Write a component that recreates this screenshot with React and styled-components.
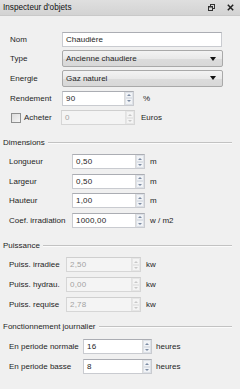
import styled, { createGlobalStyle } from "styled-components";

const GlobalStyle = createGlobalStyle`
  html, body {
    margin: 0;
    padding: 0;
    background: #f0f0f0;
  }
  body {
    font-family: "Liberation Sans", Arial, sans-serif;
    font-size: 8px;
    color: #1e1e1e;
  }
`;

const Panel = styled.div`
  width: 240px;
  height: 389px;
  display: flex;
  flex-direction: column;
  background: #f0f0f0;
  overflow: hidden;
`;

const TitleBar = styled.div`
  height: 15px;
  flex: none;
  display: flex;
  align-items: center;
  justify-content: space-between;
  padding: 0 6px 0 3px;
  background: linear-gradient(#dfdfdf, #d3d3d3);
  border-bottom: 1px solid #c9c9c9;
  font-size: 8.2px;
  color: #111;
`;

const TitleIcons = styled.div`
  display: flex;
  align-items: center;
  gap: 12px;
`;

const Section = styled.div`
  display: flex;
  flex-direction: column;
  gap: ${(p) => p.$gap}px;
  margin-top: ${(p) => p.$top}px;
  padding-left: ${(p) => p.$left}px;
`;

const GroupTitle = styled.div`
  height: 12px;
  display: flex;
  align-items: center;
  gap: 3px;
  padding: 0 8px 0 3px;
  margin-top: ${(p) => p.$top}px;
  margin-bottom: ${(p) => p.$bottom}px;
  span {
    white-space: nowrap;
  }
  &::after {
    content: "";
    flex: 1;
    height: 0;
    border-top: 1px solid #c2c2c2;
    border-bottom: 1px solid #fbfbfb;
  }
`;

const Row = styled.div`
  height: 16px;
  display: flex;
  align-items: center;
`;

const Label = styled.div`
  width: ${(p) => p.$w}px;
  flex: none;
  display: flex;
  align-items: center;
  white-space: nowrap;
`;

const Unit = styled.div`
  margin-left: ${(p) => p.$gap}px;
  white-space: nowrap;
`;

const TextInput = styled.div`
  width: ${(p) => p.$w}px;
  height: 15px;
  box-sizing: border-box;
  border: 1px solid #c9cbd0;
  border-top-color: #abadb3;
  background: #fff;
  padding-left: 3px;
  display: flex;
  align-items: center;
`;

const Combo = styled.div`
  width: ${(p) => p.$w}px;
  height: 17px;
  box-sizing: border-box;
  border: 1px solid #a9a9a9;
  border-radius: 2px;
  background: linear-gradient(#f3f3f3, #e9e9e9 50%, #dcdcdc 51%, #d8d8d8);
  padding: 0 6px 0 3px;
  display: flex;
  align-items: center;
  justify-content: space-between;
`;

const Spin = styled.div`
  width: ${(p) => p.$w}px;
  height: 15px;
  box-sizing: border-box;
  border: 1px solid ${(p) => (p.$disabled ? "#d6d6d6" : "#c9cbd0")};
  border-top-color: ${(p) => (p.$disabled ? "#cfcfcf" : "#abadb3")};
  background: ${(p) => (p.$disabled ? "#f4f4f4" : "#fff")};
  color: ${(p) => (p.$disabled ? "#a3a3a3" : "#1e1e1e")};
  display: flex;
  align-items: center;
  justify-content: space-between;
  padding-left: 3px;
  letter-spacing: 0.2px;
`;

const SpinButtons = styled.div`
  width: 8px;
  height: 13px;
  display: flex;
  flex-direction: column;
  border-left: 1px solid ${(p) => (p.$disabled ? "#e2e2e2" : "#dadada")};
  background: ${(p) => (p.$disabled ? "#f4f4f4" : "#f3f3f3")};
`;

const SpinHalf = styled.div`
  flex: 1;
  display: flex;
  align-items: center;
  justify-content: center;
  border: 1px solid ${(p) => (p.$disabled ? "#e6e6e6" : "#dde1e7")};
  background: ${(p) => (p.$disabled ? "#f4f4f4" : "#f1f3f6")};
`;

const CheckBox = styled.div`
  width: 10px;
  height: 10px;
  box-sizing: border-box;
  margin: 0 3px 0 1px;
  border: 1px solid #8e8f8f;
  background: linear-gradient(135deg, #dcdcdc, #f6f6f6);
`;

const Arrow = ({ up, color }) => (
  <svg width="4" height="2" viewBox="0 0 4 2">
    <path d={up ? "M0 2 L2 0 L4 2 Z" : "M0 0 L4 0 L2 2 Z"} fill={color} />
  </svg>
);

const SpinBox = ({ w, value, disabled }) => (
  <Spin $w={w} $disabled={disabled}>
    <span>{value}</span>
    <SpinButtons $disabled={disabled}>
      <SpinHalf $disabled={disabled}>
        <Arrow up color={disabled ? "#c8c8c8" : "#7d8ca3"} />
      </SpinHalf>
      <SpinHalf $disabled={disabled}>
        <Arrow color={disabled ? "#c8c8c8" : "#7d8ca3"} />
      </SpinHalf>
    </SpinButtons>
  </Spin>
);

const FloatIcon = () => (
  <svg width="7" height="7" viewBox="0 0 7 7">
    <rect x="2.5" y="0.5" width="4" height="4" fill="none" stroke="#333" />
    <rect x="0.5" y="2.5" width="4" height="4" fill="#d8d8d8" stroke="#333" />
    <line x1="0.5" y1="3" x2="4.5" y2="3" stroke="#333" />
  </svg>
);

const CloseIcon = () => (
  <svg width="7" height="7" viewBox="0 0 7 7">
    <path d="M0.8 0.8 L6.2 6.2 M6.2 0.8 L0.8 6.2" stroke="#222" strokeWidth="1.5" />
  </svg>
);

const ComboArrow = () => (
  <svg width="6" height="4" viewBox="0 0 6 4">
    <path d="M0 0 L6 0 L3 4 Z" fill="#111" />
  </svg>
);

const dimensions = [
  ["Longueur", "0,50", "m"],
  ["Largeur", "0,50", "m"],
  ["Hauteur", "1,00", "m"],
  ["Coef. irradiation", "1000,00", "w / m2"],
];

const puissance = [
  ["Puiss. irradiee", "2,50"],
  ["Puiss. hydrau.", "0,00"],
  ["Puiss. requise", "2,78"],
];

const journalier = [
  ["En periode normale", "16"],
  ["En periode basse", "8"],
];

export default function App() {
  return (
    <>
      <GlobalStyle />
      <Panel>
        <TitleBar>
          <span>Inspecteur d'objets</span>
          <TitleIcons>
            <FloatIcon />
            <CloseIcon />
          </TitleIcons>
        </TitleBar>

        <Section $top={15} $gap={3.7} $left={10}>
          <Row>
            <Label $w={52}>Nom</Label>
            <TextInput $w={160}>Chaudière</TextInput>
          </Row>
          <Row>
            <Label $w={52}>Type</Label>
            <Combo $w={161}>
              <span>Ancienne chaudiere</span>
              <ComboArrow />
            </Combo>
          </Row>
          <Row>
            <Label $w={52}>Energie</Label>
            <Combo $w={161}>
              <span>Gaz naturel</span>
              <ComboArrow />
            </Combo>
          </Row>
          <Row>
            <Label $w={52}>Rendement</Label>
            <SpinBox w={72} value="90" />
            <Unit $gap={9}>%</Unit>
          </Row>
          <Row>
            <Label $w={51}>
              <CheckBox />
              Acheter
            </Label>
            <SpinBox w={74} value="0" disabled />
            <Unit $gap={6}>Euros</Unit>
          </Row>
        </Section>

        <GroupTitle $top={11} $bottom={5}>
          <span>Dimensions</span>
        </GroupTitle>
        <Section $top={0} $gap={3.5} $left={9}>
          {dimensions.map(([label, value, unit]) => (
            <Row key={label}>
              <Label $w={63}>{label}</Label>
              <SpinBox w={73} value={value} />
              <Unit $gap={5}>{unit}</Unit>
            </Row>
          ))}
        </Section>

        <GroupTitle $top={11.5} $bottom={5}>
          <span>Puissance</span>
        </GroupTitle>
        <Section $top={0} $gap={4} $left={9}>
          {puissance.map(([label, value]) => (
            <Row key={label}>
              <Label $w={57}>{label}</Label>
              <SpinBox w={75} value={value} disabled />
              <Unit $gap={5}>kw</Unit>
            </Row>
          ))}
        </Section>

        <GroupTitle $top={8} $bottom={6}>
          <span>Fonctionnement journalier</span>
        </GroupTitle>
        <Section $top={0} $gap={4} $left={9}>
          {journalier.map(([label, value]) => (
            <Row key={label}>
              <Label $w={74}>{label}</Label>
              <SpinBox w={69} value={value} />
              <Unit $gap={4}>heures</Unit>
            </Row>
          ))}
        </Section>
      </Panel>
    </>
  );
}
